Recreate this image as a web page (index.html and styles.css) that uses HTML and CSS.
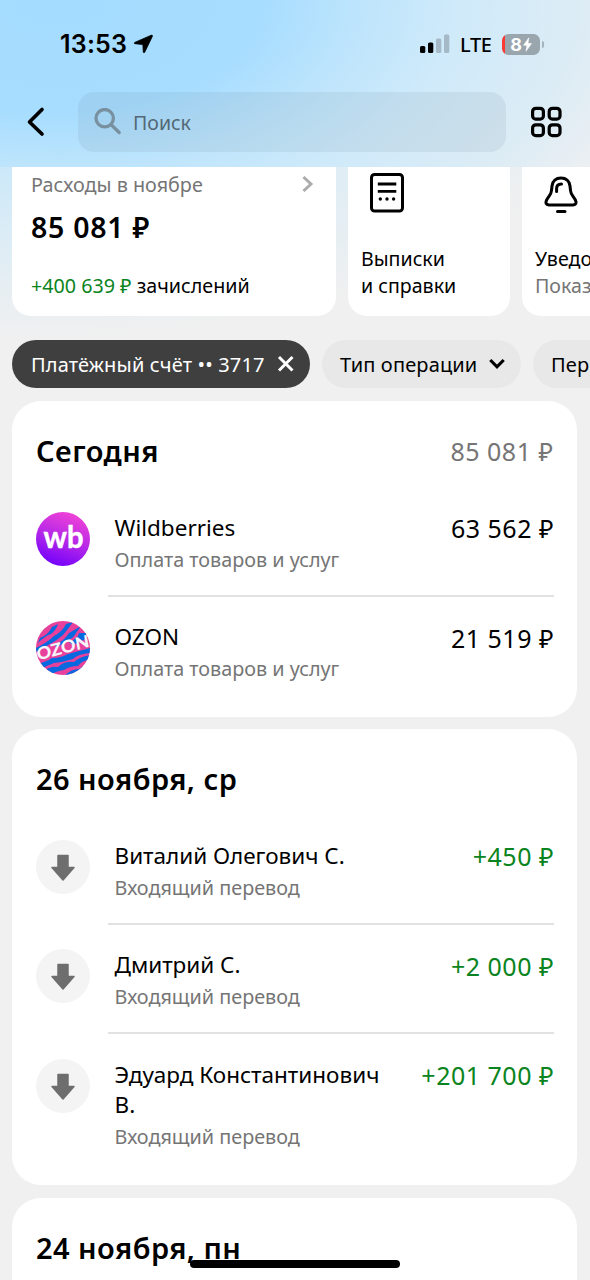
FILE: index.html
```html
<!DOCTYPE html>
<html lang="ru">
<head>
<meta charset="utf-8">
<title>История</title>
<link rel="stylesheet" href="styles.css">
</head>
<body>
<div class="screen">
  <header class="header">
    <div class="status">
      <span class="time">13:53</span>
      <svg class="loc" width="20" height="20" viewBox="0 0 20 20"><path d="M18.300 1.200 1.700 8.400Q.600 9.300 1.800 9.700L8.800 10.400Q9.800 10.500 9.900 11.300L10.300 18.200Q10.900 19.400 11.700 18.300L19.400 2.300Q19.600 .800 18.300 1.200Z" fill="#000" stroke="#000" stroke-width=".8"/></svg>
      <svg class="signal" width="30" height="20" viewBox="0 0 30 20"><rect x="0" y="12" width="5.300" height="7" rx="1.500"/><rect x="8" y="8.500" width="5.300" height="10.500" rx="1.500"/><g fill="#a5bac6"><rect x="16" y="4.500" width="5.300" height="14.500" rx="1.500"/><rect x="24" y="0.500" width="5.300" height="18.500" rx="1.500"/></g></svg>
      <span class="lte">LTE</span>
      <span class="battery"><span>8</span><svg width="9" height="15" viewBox="0 0 9 15"><path d="M5.800 .800 .600 8.300H4L3 14.200 8.500 6.500H5Z" fill="#fff" stroke="#fff" stroke-width=".600" stroke-linejoin="round"/></svg></span>
      <i class="battery-cap"></i>
    </div>
    <div class="nav">
      <svg class="back" width="20" height="32" viewBox="0 0 20 32"><path d="M16 3.500 3.500 16 16 28" fill="none" stroke="#000" stroke-width="3.700" stroke-linecap="round" stroke-linejoin="round"/></svg>
      <div class="search">
        <svg width="28" height="28" viewBox="0 0 28 28" fill="none" stroke="#78909f" stroke-width="3.300" stroke-linecap="round"><circle cx="10.700" cy="10.200" r="8.700"/><path d="m17.200 16.700 8 7.800"/></svg>
        <span>Поиск</span>
      </div>
      <svg class="grid" width="32" height="32" viewBox="0 0 32 32" fill="none" stroke="#000" stroke-width="3.200"><rect x="2.600" y="2.300" width="10.800" height="10.800" rx="3.200"/><rect x="19.200" y="2.300" width="10.800" height="10.800" rx="3.200"/><rect x="2.600" y="18.800" width="10.800" height="10.800" rx="3.200"/><rect x="19.200" y="18.800" width="10.800" height="10.800" rx="3.200"/></svg>
    </div>
  </header>

  <div class="tiles">
    <div class="tile spend">
      <div class="spend-top"><span>Расходы в ноябре</span><svg width="12" height="16" viewBox="0 0 12 16"><path d="m2.500 2 6.500 6-6.500 6" fill="none" stroke="#ababab" stroke-width="2.900" stroke-linecap="square"/></svg></div>
      <div class="spend-sum">85 081 ₽</div>
      <div class="spend-in"><span class="green">+400 639 ₽</span> зачислений</div>
    </div>
    <div class="tile docs">
      <svg width="52" height="44" viewBox="0 0 52 44"><rect x="11.500" y="2.500" width="31" height="36.500" rx="3" fill="none" stroke="#000" stroke-width="3"/><path d="M17.800 12h18.500M17.800 19.400h18.500" stroke="#000" stroke-width="2.800"/><circle cx="20.300" cy="27" r="1.700"/><circle cx="27" cy="27" r="1.700"/><circle cx="33.600" cy="27" r="1.700"/></svg>
      <p>Выписки<br>и справки</p>
    </div>
    <div class="tile bell">
      <svg width="52" height="44" viewBox="0 0 52 44" fill="none" stroke="#000" stroke-width="3" stroke-linecap="round" stroke-linejoin="round"><path d="M27 6C22 6 18.500 9 18 14L17.500 18.500C17.300 22 15.500 23.500 13.500 26.500L12.600 28Q10.500 32.500 15 33H39Q43.500 32.500 41.400 28L40.500 26.500C38.500 23.500 36.700 22 36.500 18.500L36 14C35.500 9 32 6 27 6Z"/><path d="M22.600 19.500V16.500Q22.600 12 27.500 12M23.500 39.500H31"/></svg>
      <p>Уведо<br><span>Показ</span></p>
    </div>
  </div>

  <div class="chips">
    <div class="chip dark"><span>Платёжный счёт •• 3717</span><svg width="18" height="18" viewBox="0 0 18 18"><path d="m2 2 13.500 13.500M15.500 2 2 15.500" stroke="#fff" stroke-width="3"/></svg></div>
    <div class="chip type"><span>Тип операции</span><svg width="16" height="12" viewBox="0 0 16 12"><path d="m1.300 2 6.700 6.800L14.700 2" fill="none" stroke="#000" stroke-width="3.200"/></svg></div>
    <div class="chip period"><span>Пер</span></div>
  </div>

  <section class="day">
    <div class="day-head"><h2>Сегодня</h2><span class="total">85 081 ₽</span></div>
    <div class="row">
      <svg class="avatar" viewBox="0 0 54 54"><defs><linearGradient id="wb" x1=".68" y1="0" x2=".32" y2="1"><stop offset="0" stop-color="#f244d5"/><stop offset=".5" stop-color="#b628e8"/><stop offset="1" stop-color="#7100fb"/></linearGradient></defs><circle cx="27" cy="27" r="27" fill="url(#wb)"/><text class="wb" x="7.500" y="35.500" textLength="40" lengthAdjust="spacingAndGlyphs">wb</text></svg>
      <div class="info"><div class="body"><b>Wildberries</b><small>Оплата товаров и услуг</small></div><span class="amount">63 562 ₽</span></div>
    </div>
    <div class="row">
      <svg class="avatar" viewBox="0 0 54 54"><defs><clipPath id="oz"><circle cx="27" cy="27" r="27"/></clipPath></defs><g clip-path="url(#oz)"><path fill="#e8419c" d="M0 0h54v54H0z"/><g fill="#0868df"><path d="M4 17Q12 14 16 6L22 3Q20 9 15 13 9 15 2 22Z"/><path d="M0 27Q12 21 18 15 26 11 30 3L37 1Q33 7 27 14 20 20 14 23L0 31Z"/><path d="M19 24Q29 19 33 12L45 5 40 12Q37 18 30 20L21 27Z"/><path d="M33 21Q42 18 43 12L51 12 48 19 37 24Z"/><path d="M0 43Q10 41 16 37 25 37 32 33L54 27V32Q42 33 37 38 28 41 18 42 10 45 3 49Z"/><path d="M6 51Q14 45 22 46 28 40 38 41 43 36 54 34V39Q46 39 42 45 34 45 28 49 20 50 14 54H6Z"/><path d="M28 55Q35 48 43 48L54 40V49L42 53Z"/></g><text class="ozon" x="0" y="0" transform="translate(2 39.500) rotate(-15) skewX(-4)" textLength="54" lengthAdjust="spacingAndGlyphs">OZON</text></g></svg>
      <div class="info"><div class="body"><b>OZON</b><small>Оплата товаров и услуг</small></div><span class="amount">21 519 ₽</span></div>
    </div>
  </section>

  <section class="day">
    <div class="day-head"><h2>26 ноября, ср</h2></div>
    <div class="row">
      <svg class="avatar" viewBox="0 0 54 54"><circle cx="27" cy="27" r="27" fill="#f4f4f4"/><path class="arrow" d="M22 15.500H32V27.500H38L27 40 16 27.500H22Z"/></svg>
      <div class="info"><div class="body"><b>Виталий Олегович С.</b><small>Входящий перевод</small></div><span class="amount green">+450 ₽</span></div>
    </div>
    <div class="row">
      <svg class="avatar" viewBox="0 0 54 54"><circle cx="27" cy="27" r="27" fill="#f4f4f4"/><path class="arrow" d="M22 15.500H32V27.500H38L27 40 16 27.500H22Z"/></svg>
      <div class="info"><div class="body"><b>Дмитрий С.</b><small>Входящий перевод</small></div><span class="amount green">+2 000 ₽</span></div>
    </div>
    <div class="row">
      <svg class="avatar" viewBox="0 0 54 54"><circle cx="27" cy="27" r="27" fill="#f4f4f4"/><path class="arrow" d="M22 15.500H32V27.500H38L27 40 16 27.500H22Z"/></svg>
      <div class="info"><div class="body"><b>Эдуард Константинович<br>В.</b><small>Входящий перевод</small></div><span class="amount green">+201 700 ₽</span></div>
    </div>
  </section>

  <section class="day last">
    <div class="day-head"><h2>24 ноября, пн</h2></div>
  </section>
  <div class="home"></div>
</div>
</body>
</html>
```
FILE: styles.css
```css
* { box-sizing: border-box; }
body { margin: 0; background: #f0f0f0; color: #000; font-family: "Noto Sans", "Open Sans", sans-serif; font-weight: 450; }
svg { display: block; flex: none; }
p, h2 { margin: 0; }
.screen { position: relative; width: 590px; height: 1280px; overflow: hidden; background: radial-gradient(600px 240px at 0 100px, #c2e6fb 15%, #cde9f9 30%, #dfedf5 63%, #f0f0f0 100%); }
.screen > * { white-space: nowrap; }
.green { color: #0a8420; }

.header { height: 167px; background: radial-gradient(590px 330px at 60px 0, #a4dcff 0%, #a7ddff 34%, #bfe5fc 52%, #cfeafa 67%, #dcecf5 88%, #eef0f2 105%); }
.status { display: flex; align-items: center; height: 92px; padding: 0 0 4px 60px; }
.time { font: 600 25px/30px Inter, sans-serif; width: 68px; letter-spacing: .2px; }
.loc { margin-left: 5px; }
.signal { margin-left: 267px; }
.lte { font: 500 20px/30px "Noto Sans", sans-serif; width: 42px; margin-left: 10px; letter-spacing: -.4px; padding-top: 1px; }
.battery { display: flex; align-items: center; justify-content: center; gap: 1px; width: 38px; height: 21px; border-radius: 6.500px; background: linear-gradient(90deg, #fb3934 3px, #9aa6ae 3px); color: #fff; font: 700 18px/21px Inter, sans-serif; }
.battery-cap { width: 2.500px; height: 7px; margin-left: 1.500px; border-radius: 0 3px 3px 0; background: #a5b2ba; }
.nav { display: flex; align-items: center; height: 60px; padding-left: 26px; }
.search { display: flex; align-items: center; gap: 11px; width: 428px; height: 60px; margin: 0 24px 0 32px; padding-left: 16px; border-radius: 16px; background: rgba(110, 135, 145, .12); color: #536874; font-size: 19.500px; }

.tiles { display: flex; gap: 12px; height: 149px; padding-left: 12px; }
.tile { flex: none; height: 149px; background: #fff; border-radius: 0 0 19px 19px; }
.spend { width: 324px; padding: 1px 22px 0 19px; }
.spend-top { display: flex; justify-content: space-between; align-items: center; height: 32px; font-size: 19.800px; color: #757575; font-weight: 430; }
.spend-sum { margin-top: 8px; font-size: 28.500px; line-height: 38px; font-weight: 600; letter-spacing: .75px; }
.spend-in { margin-top: 26px; font-size: 19.700px; line-height: 27px; }
.docs, .bell { width: 162px; padding-top: 5px; }
.docs svg, .bell svg { margin-left: 12px; }
.docs p, .bell p { margin: 29px 0 0 13px; font-size: 19.600px; line-height: 27px; }
.bell p span { color: #757575; font-weight: 430; }

.chips { display: flex; gap: 12px; margin: 24px 0 13px; padding-left: 12px; }
.chip { display: flex; align-items: center; flex: none; height: 48px; border-radius: 24px; padding: 0 18px; background: #e8e8e8; font-size: 20px; letter-spacing: .15px; justify-content: space-between; }
.dark { width: 298px; padding-left: 19px; padding-right: 15px; background: #3f3f3f; color: #fff; }
.type { width: 199px; padding-right: 16px; }
.period { width: 130px; }

.day { width: 565px; height: 316px; margin: 0 0 12.300px 12px; border-radius: 29px; background: #fff; }
.day + .day { height: 456px; }
.day-head { display: flex; justify-content: space-between; align-items: center; height: 86px; padding: 14px 24px 0; }
h2 { font-size: 29px; line-height: 40px; font-weight: 600; letter-spacing: .45px; }
.total, .amount { font-size: 25px; line-height: 32px; letter-spacing: .5px; margin-right: -.5px; }
.total { color: #757575; }
.amount { padding-top: 25px; }
.row { display: flex; padding-left: 24px; }
.avatar { width: 54px; height: 54px; margin: 24.500px 18px 0 0; }
.info { display: flex; justify-content: space-between; width: 445.500px; padding-left: 6.500px; min-height: 109.600px; border-bottom: 2px solid #e2e2e2; }
.row:last-child .info { border: 0; }
.body { padding: 25.500px 0 21px; }
b { display: block; font-weight: 450; font-size: 22.500px; line-height: 30px; }
small { display: block; margin-top: 3px; font-size: 19.800px; line-height: 28px; color: #757575; font-weight: 430; }
.wb { font: 700 30px Lato, sans-serif; fill: #fff; stroke: #fff; stroke-width: .5px; }
.ozon { font: 900 17px Lato, sans-serif; fill: #f4f4fa; }
.arrow { fill: #6e6e6e; stroke: #6e6e6e; stroke-width: 1.500; stroke-linejoin: round; }
.home { position: absolute; left: 190px; top: 1260px; width: 210px; height: 8px; border-radius: 4px; background: #000; }
```
